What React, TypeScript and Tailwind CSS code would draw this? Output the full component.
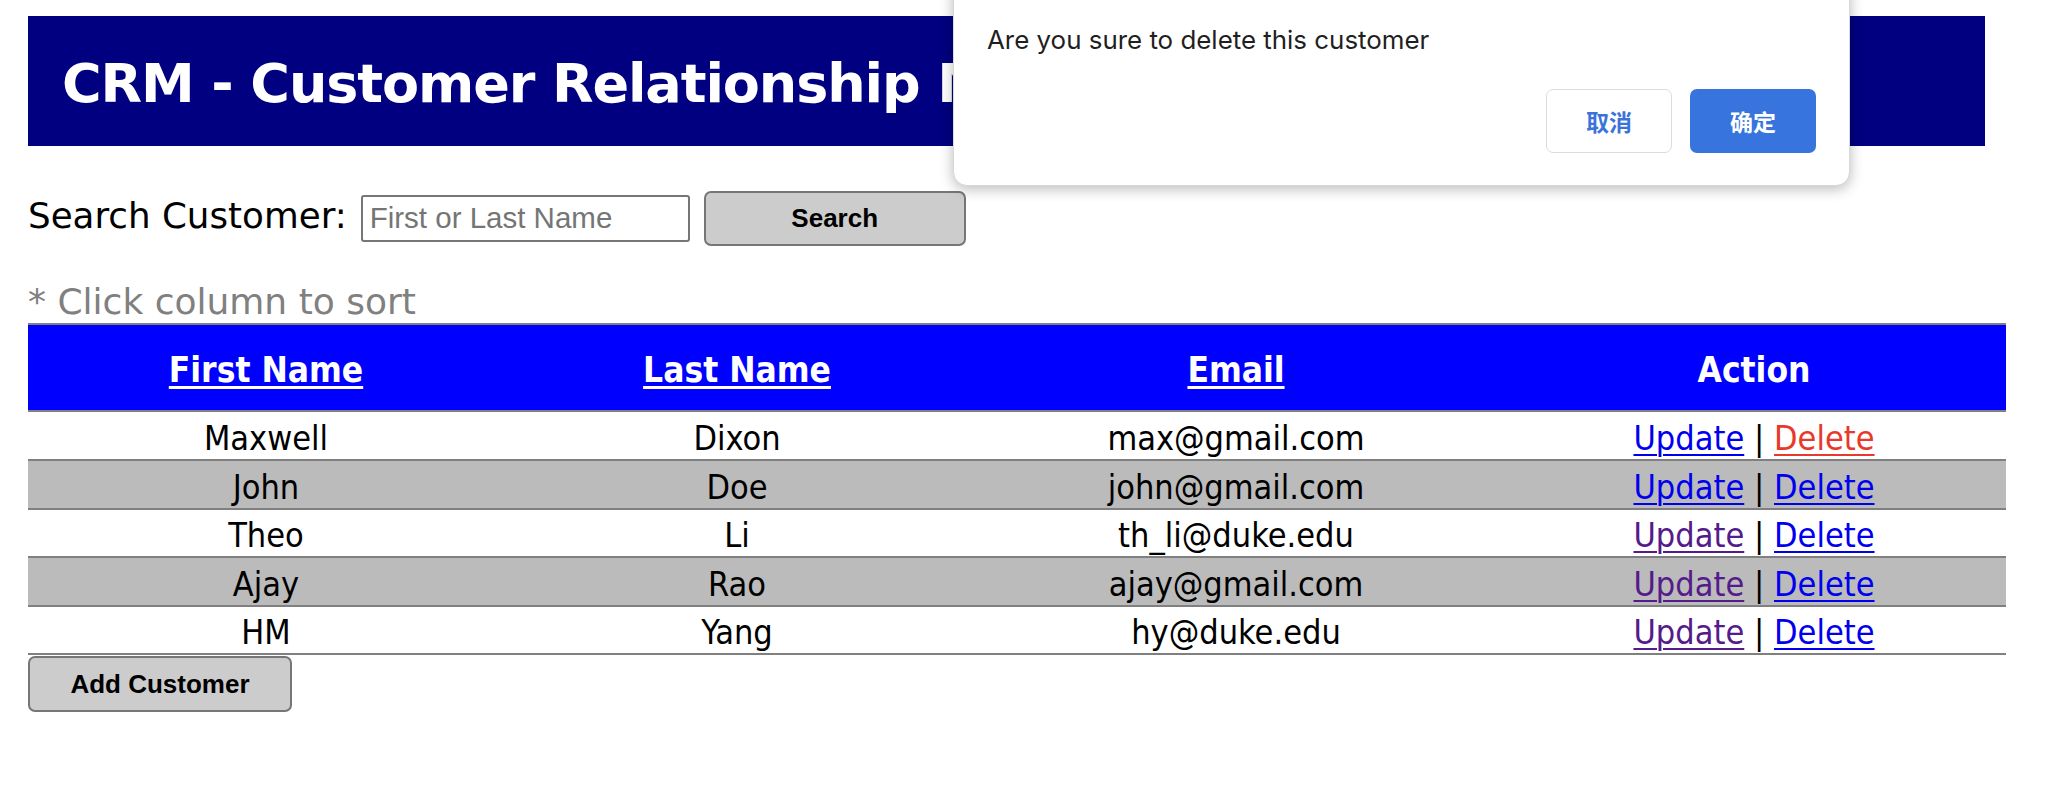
import React from "react";

type Row = {
  first: string;
  last: string;
  email: string;
  updateColor: string;
  deleteColor: string;
  bg: string;
  h: string;
};

const rows: Row[] = [
  { first: "Maxwell", last: "Dixon", email: "max@gmail.com", updateColor: "text-[#0000ee]", deleteColor: "text-[#e8392a]", bg: "bg-white", h: "h-[49px]" },
  { first: "John", last: "Doe", email: "john@gmail.com", updateColor: "text-[#0000ee]", deleteColor: "text-[#0000ee]", bg: "bg-[#bbbbbb]", h: "h-[49px]" },
  { first: "Theo", last: "Li", email: "th_li@duke.edu", updateColor: "text-[#551a8b]", deleteColor: "text-[#0000ee]", bg: "bg-white", h: "h-[48px]" },
  { first: "Ajay", last: "Rao", email: "ajay@gmail.com", updateColor: "text-[#551a8b]", deleteColor: "text-[#0000ee]", bg: "bg-[#bbbbbb]", h: "h-[49px]" },
  { first: "HM", last: "Yang", email: "hy@duke.edu", updateColor: "text-[#551a8b]", deleteColor: "text-[#0000ee]", bg: "bg-white", h: "h-[48px]" },
];

export default function App() {
  return (
    <div className="relative w-[2048px] h-[786px] overflow-hidden bg-white">
      <div className="pl-[28px] pt-[16px]">
        {/* Header */}
        <div className="w-[1957px] h-[130px] bg-[#000080] flex items-center pl-[34px] pt-[5px]">
          <h1 className="text-white font-bold text-[54px] leading-none whitespace-nowrap tracking-[-1.1px] font-['DejaVu_Sans',sans-serif]">
            CRM - Customer Relationship Manager
          </h1>
        </div>

        {/* Search row */}
        <div className="mt-[44px] h-[56px] flex items-center">
          <span className="text-[35.7px] text-black leading-none font-['DejaVu_Sans',sans-serif] whitespace-nowrap pb-[5px]">
            Search Customer:
          </span>
          <input
            type="text"
            placeholder="First or Last Name"
            className="ml-[14px] w-[329px] h-[47px] border-2 border-[#767676] rounded-[3px] px-[7px] text-[29.5px] placeholder:text-[#757575] font-['Liberation_Sans',Arial,sans-serif] outline-none"
          />
          <button className="ml-[14px] w-[262px] h-[55px] bg-[#cccccc] border-2 border-[#767676] rounded-[7px] text-[26px] font-bold text-black font-['Liberation_Sans',Arial,sans-serif]">
            Search
          </button>
        </div>

        {/* sort hint */}
        <div className="mt-[36px] h-[40px] flex items-center text-[36px] text-[#808080] leading-none font-['DejaVu_Sans',sans-serif] whitespace-nowrap">
          * Click column to sort
        </div>

        {/* Table */}
        <div className="mt-[1px] w-[1978px] font-['DejaVu_Sans_Condensed','DejaVu_Sans',sans-serif] font-stretch-condensed">
          <div className="grid grid-cols-[476px_466px_532px_504px] h-[89px] border-t-2 border-b-2 border-[#808080] bg-[#0000ff] items-center text-white font-bold text-[35px] leading-none pt-[5px]">
            <div className="text-center"><a className="underline underline-offset-[4px] decoration-[3px] cursor-pointer">First Name</a></div>
            <div className="text-center"><a className="underline underline-offset-[4px] decoration-[3px] cursor-pointer">Last Name</a></div>
            <div className="text-center"><a className="underline underline-offset-[4px] decoration-[3px] cursor-pointer">Email</a></div>
            <div className="text-center">Action</div>
          </div>
          {rows.map((r) => (
            <div
              key={r.email}
              className={`grid grid-cols-[476px_466px_532px_504px] ${r.h} border-b-2 border-[#808080] ${r.bg} items-center text-black text-[34px] leading-none pt-[4px]`}
            >
              <div className="text-center">{r.first}</div>
              <div className="text-center">{r.last}</div>
              <div className="text-center">{r.email}</div>
              <div className="text-center whitespace-nowrap">
                <a className={`${r.updateColor} underline underline-offset-[4px] decoration-[2px] cursor-pointer`}>Update</a>
                <span className="text-black"> | </span>
                <a className={`${r.deleteColor} underline underline-offset-[4px] decoration-[2px] cursor-pointer`}>Delete</a>
              </div>
            </div>
          ))}
        </div>

        <button className="mt-[1px] w-[264px] h-[56px] bg-[#cccccc] border-2 border-[#767676] rounded-[7px] text-[26px] font-bold text-black font-['Liberation_Sans',Arial,sans-serif]">
          Add Customer
        </button>
      </div>

      {/* Alert dialog */}
      <div className="absolute left-[953px] top-[-20px] w-[897px] h-[206px] bg-white rounded-[14px] shadow-[0_3px_14px_rgba(0,0,0,0.28)] border border-[#d8d8d8] font-['Inter','Noto_Sans_CJK_SC',sans-serif]">
        <div className="pl-[33px] pt-[46px] text-[25.9px] leading-none text-[#1f1f1f]">
          Are you sure to delete this customer
        </div>
        <div className="absolute right-[33px] bottom-[32px] flex gap-[18px]">
          <button className="w-[126px] h-[64px] rounded-[7px] border border-[#dadce0] bg-white text-[#3b73d9] text-[23px] font-semibold font-['Noto_Sans_CJK_SC',sans-serif]">
            取消
          </button>
          <button className="w-[126px] h-[64px] rounded-[7px] bg-[#3874dd] text-white text-[23px] font-semibold font-['Noto_Sans_CJK_SC',sans-serif]">
            确定
          </button>
        </div>
      </div>
    </div>
  );
}
